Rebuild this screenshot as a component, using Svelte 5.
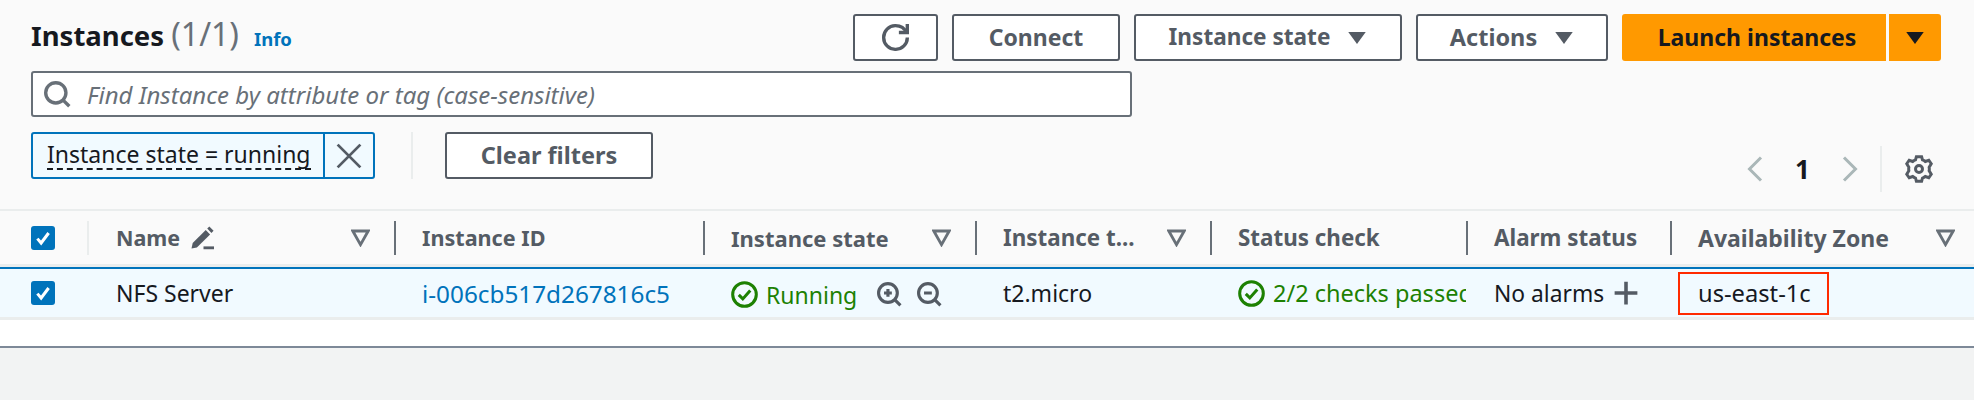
<script>
	const columns = [
		{ label: 'Name', edit: true, sort: true },
		{ label: 'Instance ID' },
		{ label: 'Instance state', sort: true },
		{ label: 'Instance t...', sort: true },
		{ label: 'Status check' },
		{ label: 'Alarm status' },
		{ label: 'Availability Zone', sort: true }
	];
</script>

{#snippet caret()}
	<svg class="caret" viewBox="0 0 16 16"><path d="M1 4h14L8 13.500z" /></svg>
{/snippet}

{#snippet statusOk()}
	<svg class="ok" viewBox="0 0 16 16">
		<circle cx="8" cy="8" r="7" />
		<path d="M4.600 8.200 7 10.600l4.400-5" />
	</svg>
{/snippet}

<div class="page">
	<div class="top">
		<div class="toolbar">
			<h1>Instances <span class="count">(1/1)</span></h1>
			<span class="info">Info</span>
			<div class="actions">
				<button class="btn refresh" aria-label="Refresh">
					<svg viewBox="0 0 16 16">
						<path d="M10 5h5V0" />
						<path d="M15 8a6.880 6.880 0 0 1-7 7 6.880 6.880 0 0 1-7-7 6.880 6.880 0 0 1 7-7 7.180 7.180 0 0 1 6.609 4.335" />
					</svg>
				</button>
				<button class="btn connect">Connect</button>
				<button class="btn state">Instance state {@render caret()}</button>
				<button class="btn menu">Actions {@render caret()}</button>
				<div class="launch">
					<button class="primary main">Launch instances</button>
					<button class="primary drop" aria-label="More launch options">{@render caret()}</button>
				</div>
			</div>
		</div>

		<div class="search">
			<svg viewBox="0 0 16 16">
				<circle cx="7" cy="7" r="6" />
				<path d="m11.300 11.300 3.700 3.700" />
			</svg>
			<span>Find Instance by attribute or tag (case-sensitive)</span>
		</div>

		<div class="filters">
			<div class="chip">
				<span class="chip-text"><span>Instance state = running</span></span>
				<button class="chip-close" aria-label="Remove filter">
					<svg viewBox="0 0 16 16"><path d="m1.500 1.500 13 13M14.500 1.500l-13 13" /></svg>
				</button>
			</div>
			<div class="divider"></div>
			<button class="btn clear">Clear filters</button>
			<div class="pager">
				<svg class="chev" viewBox="0 0 16 26"><path d="M14 1.500 2.500 13 14 24.500" /></svg>
				<span class="page-no">1</span>
				<svg class="chev" viewBox="0 0 16 26"><path d="M2 1.500 13.500 13 2 24.500" /></svg>
				<div class="pager-sep"></div>
				<svg class="gear" viewBox="0 0 16 16">
					<path d="M13.900 8a6 6 0 0 0-.1-1l1.200-2-1.400-2-2 .7a6 6 0 0 0-1.600-.9L9.500 1h-3L6 2.800c-.6.2-1.100.5-1.600.9l-2-.7L1 5l1.200 2a6 6 0 0 0 0 2L1 11l1.400 2 2-.7c.5.4 1 .7 1.600.9L6.500 15h3l.5-1.800c.6-.2 1.100-.5 1.600-.9l2 .7L15 11l-1.200-2c.1-.3.1-.7.1-1z" />
					<circle cx="8" cy="8" r="2" />
				</svg>
			</div>
		</div>
	</div>

	<div class="table">
		<div class="grid head">
			<div class="select"><span class="check"><svg viewBox="0 0 16 16"><path d="M3.500 8.500 6.500 12l6-8" /></svg></span><i class="first-sep"></i></div>
			{#each columns as col}
				<div class="th">
					<span class="label">{col.label}</span>
					{#if col.edit}
						<svg class="pen" viewBox="0 0 16 16">
							<path class="fill" d="M1 15l.8-3.600L10.500 2.700l2.900 2.900-8.800 8.700z" />
							<path class="fill" d="M11.500 1.700 12.900.4l2.800 2.800-1.400 1.400z" />
							<path class="fill" d="M9 13.600h7V15.500H9z" />
						</svg>
					{/if}
					{#if col.sort}
						<svg class="sort" viewBox="0 0 16 16"><path d="M1.500 2.500h13L8 14z" /></svg>
					{/if}
				</div>
			{/each}
		</div>
		<div class="grid row">
			<div class="select"><span class="check"><svg viewBox="0 0 16 16"><path d="M3.500 8.500 6.500 12l6-8" /></svg></span></div>
			<div class="td">NFS Server</div>
			<div class="td link">i-006cb517d267816c5</div>
			<div class="td running">
				{@render statusOk()}
				<span class="green">Running</span>
				<svg class="zoom first" viewBox="0 0 16 16"><circle cx="7" cy="7" r="6" /><path d="m11.300 11.300 3.700 3.700M7 4.500v5M4.500 7h5" /></svg>
				<svg class="zoom" viewBox="0 0 16 16"><circle cx="7" cy="7" r="6" /><path d="m11.300 11.300 3.700 3.700M4.500 7h5" /></svg>
			</div>
			<div class="td">t2.micro</div>
			<div class="td checks">
				{@render statusOk()}
				<span class="green">2/2 checks passed</span>
			</div>
			<div class="td alarm">
				<span>No alarms</span>
				<svg class="plus" viewBox="0 0 16 16"><path d="M8 1v14M1 8h14" /></svg>
			</div>
			<div class="td zone"><span class="highlight">us-east-1c</span></div>
		</div>
		<div class="blank"></div>
	</div>
</div>

<style>
	:global(body) {
		margin: 0;
		background: #f2f3f3;
	}

	.page {
		width: 1974px;
		height: 400px;
		overflow: hidden;
		font-family: 'Noto Sans', sans-serif;
		font-size: 23px;
		color: #16191f;
		background: #f2f3f3;
	}

	svg {
		display: block;
		fill: none;
		stroke: currentColor;
		stroke-width: 2;
		flex: none;
	}

	button {
		font-family: inherit;
		cursor: pointer;
	}

	.top {
		background: #fafafa;
		padding: 14px 0 17px 31px;
	}

	.toolbar {
		display: flex;
		align-items: center;
		height: 47px;
		margin-bottom: 10px;
	}

	h1 {
		margin: 0 0 5px;
		font-size: 27.500px;
		font-weight: 700;
		line-height: 42px;
	}

	.count {
		font-size: 32px;
		font-weight: 400;
		color: #687078;
	}

	.info {
		margin: 2px 0 0 15px;
		font-size: 18.500px;
		font-weight: 700;
		color: #0073bb;
	}

	.actions {
		display: flex;
		gap: 14px;
		margin-left: auto;
		margin-right: 33px;
	}

	.btn {
		display: flex;
		align-items: center;
		justify-content: center;
		gap: 17px;
		height: 47px;
		padding: 0 0 2px;
		box-sizing: border-box;
		background: #fff;
		border: 2px solid #545b64;
		border-radius: 3px;
		font-size: 23px;
		font-weight: 700;
		color: #545b64;
	}

	.refresh { width: 85px; padding: 0; }
	.refresh svg { width: 27px; height: 27px; }
	.connect { width: 168px; }
	.state { width: 268px; font-size: 22.600px; }
	.menu { width: 192px; font-size: 23.500px; }
	.clear { width: 208px; font-size: 23.500px; }

	.caret {
		width: 20px;
		height: 20px;
		fill: currentColor;
		stroke: none;
	}

	.launch {
		display: flex;
		gap: 3px;
	}

	.primary {
		display: flex;
		align-items: center;
		justify-content: center;
		height: 47px;
		padding: 0 0 2px;
		border: 0;
		background: #f90;
		font-size: 23px;
		font-weight: 700;
		color: #16191f;
	}

	.main {
		width: 264px;
		padding-left: 6px;
		border-radius: 3px 0 0 3px;
	}

	.drop {
		width: 52px;
		border-radius: 0 3px 3px 0;
	}

	.search {
		display: flex;
		align-items: center;
		gap: 16px;
		width: 1101px;
		height: 46px;
		box-sizing: border-box;
		padding-left: 11px;
		margin-bottom: 15px;
		background: #fff;
		border: 2px solid #687078;
		border-radius: 3px;
		font-size: 24px;
		font-style: italic;
		color: #687078;
	}

	.search svg {
		width: 27px;
		height: 27px;
	}

	.filters {
		display: flex;
		align-items: flex-start;
		height: 60px;
	}

	.chip {
		display: flex;
		width: 344px;
		height: 47px;
		box-sizing: border-box;
		background: #f1faff;
		border: 2px solid #0073bb;
		border-radius: 3px;
	}

	.chip-text {
		display: flex;
		align-items: center;
		flex: 1;
		padding-left: 14px;
		white-space: nowrap;
		overflow: hidden;
	}

	.chip-text span {
		line-height: 27px;
		border-bottom: 2px dashed #16191f;
	}

	.chip-close {
		display: flex;
		align-items: center;
		justify-content: center;
		width: 50px;
		padding: 0;
		background: none;
		border: 0;
		border-left: 2px solid #0073bb;
		color: #545b64;
	}

	.chip-close svg {
		width: 28px;
		height: 28px;
		stroke-width: 1.600;
	}

	.divider {
		width: 2px;
		height: 47px;
		margin: 0 32px 0 36px;
		background: #eaeded;
	}

	.pager {
		display: flex;
		align-items: center;
		margin-left: auto;
		height: 46px;
		margin-top: 14px;
		color: #545b64;
	}

	.chev {
		width: 16px;
		height: 26px;
		color: #aab7b8;
		stroke-width: 3;
	}

	.page-no {
		width: 79px;
		text-align: center;
		font-size: 26px;
		font-weight: 700;
		color: #16191f;
	}

	.pager-sep {
		width: 2px;
		height: 46px;
		margin: 0 23px 0 22px;
		background: #eaeded;
	}

	.gear {
		width: 28px;
		height: 28px;
		margin-right: 41px;
		stroke-width: 1.700;
	}

	.table {
		background: #fff;
		border-top: 2px solid #eaeded;
	}

	.grid {
		display: grid;
		grid-template-columns: 88px 306px 309px 272px 235px 256px 204px 304px;
	}

	.head {
		height: 56px;
		background: #fafafa;
		border-bottom: 3px solid #eaeded;
		box-sizing: border-box;
		font-weight: 700;
		color: #545b64;
	}

	.select {
		display: flex;
		align-items: center;
		padding-left: 31px;
	}

	.head .select {
		justify-content: space-between;
	}

	.check {
		display: flex;
		align-items: center;
		justify-content: center;
		width: 24px;
		height: 24px;
		border-radius: 3px;
		background: #0073bb;
		color: #fff;
	}

	.check svg {
		width: 20px;
		height: 20px;
		stroke-width: 2.400;
	}

	.first-sep {
		width: 2px;
		height: 34px;
		background: #eaeded;
		margin-right: -1px;
	}

	.th {
		display: flex;
		align-items: center;
		height: 34px;
		align-self: center;
		box-sizing: border-box;
		padding: 0 24px 0 26px;
		border-left: 2px solid #687078;
		font-size: 22.400px;
		white-space: nowrap;
	}

	.th:nth-child(2) {
		border-left: 0;
		padding-left: 28px;
		font-size: 21.500px;
	}

	.th:nth-child(3) {
		font-size: 21.600px;
	}

	.th:nth-child(4) {
		font-size: 22px;
	}

	.th:last-child {
		padding-right: 19px;
		font-size: 23px;
	}

	.pen {
		width: 24px;
		height: 24px;
		margin-left: 10px;
	}

	.pen .fill {
		fill: currentColor;
		stroke: none;
	}

	.sort {
		width: 19px;
		height: 19px;
		margin-left: auto;
		color: #687078;
		stroke-width: 2.400;
	}

	.row {
		height: 48px;
		background: #f1faff;
		border-top: 2px solid #0073bb;
		border-bottom: 3px solid #eaeded;
	}

	.td {
		display: flex;
		align-items: center;
		padding-left: 28px;
		white-space: nowrap;
		overflow: hidden;
	}

	.link {
		font-size: 24.300px;
		color: #0073bb;
	}

	.green {
		color: #1d8102;
	}

	.ok {
		width: 27px;
		height: 27px;
		margin-right: 8px;
		color: #1d8102;
		stroke-width: 1.800;
	}

	.running {
		padding-top: 3px;
	}

	.checks {
		font-size: 23.500px;
	}

	.zoom {
		width: 25px;
		height: 25px;
		margin-left: 15px;
		color: #545b64;
	}

	.zoom.first {
		margin-left: 20px;
	}

	.alarm {
		gap: 9px;
		font-size: 22.800px;
	}

	.plus {
		width: 26px;
		height: 26px;
		color: #545b64;
		stroke-width: 2.200;
	}

	.zone {
		padding-left: 8px;
		font-size: 23.700px;
	}

	.highlight {
		display: flex;
		align-items: center;
		width: 151px;
		height: 43px;
		box-sizing: border-box;
		padding-left: 18px;
		border: 2px solid #ff2a00;
	}

	.blank {
		height: 26px;
		background: #fff;
		border-bottom: 2px solid #7d8998;
	}
</style>
